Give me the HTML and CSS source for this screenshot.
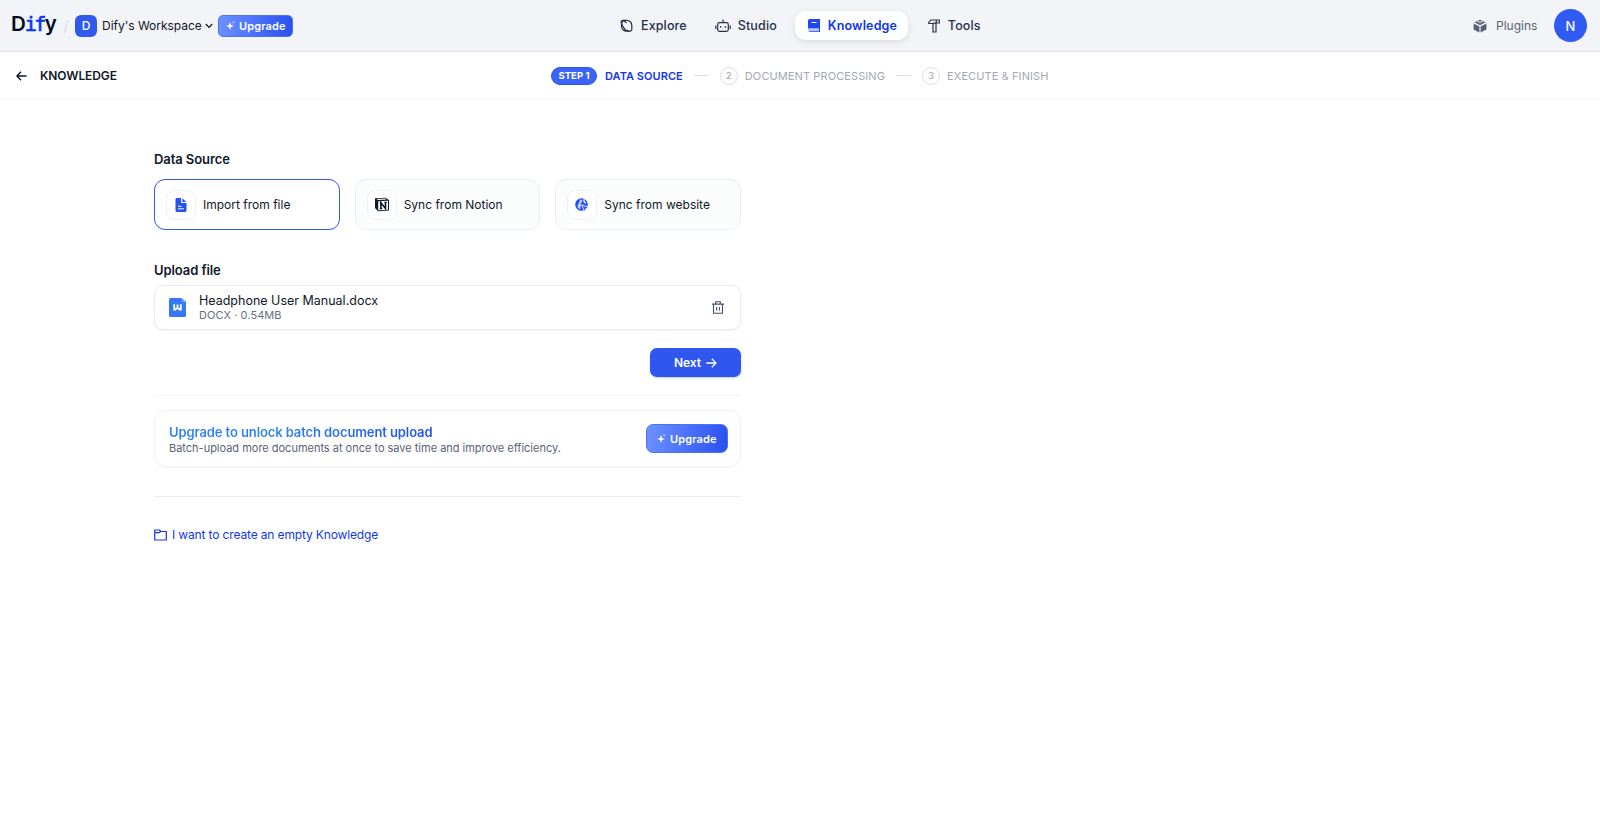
FILE: index.html
```html
<!DOCTYPE html>
<html lang="en">
<head>
<meta charset="utf-8">
<title>Dify - Knowledge</title>
<link rel="stylesheet" href="styles.css">
</head>
<body>
<header class="topbar">
  <div class="brand">
    <span class="logo">D<span class="logo-mid">if</span>y</span>
    <svg class="slash" width="6" height="14" viewBox="0 0 6 14"><path d="M5 .5 1 13.5"/></svg>
    <span class="ws-avatar">D</span>
    <span class="ws-name">Dify's Workspace</span>
    <svg class="chevron" width="8" height="6" viewBox="0 0 8 6"><path d="m.8 1 3.2 3.4L7.2 1"/></svg>
    <button class="upgrade upgrade-sm"><svg width="9" height="9" viewBox="0 0 9 9"><path d="M4 1 5 4 8 5 5 6 4 9 3 6 0 5 3 4z"/><path class="spark" d="M7.3 0v2.4M6.1 1.2h2.4"/></svg><span>Upgrade</span></button>
  </div>
  <nav class="nav">
    <a class="nav-item explore"><svg width="13" height="14" viewBox="0 0 13 14"><path d="M3.500 1.300h3.300a5 5 0 0 1 5 5v4.500l-1.200 1.400H6.500A5 5 0 0 1 1.500 7.200V4.500z"/><path d="M3.500 1.300C1 1.300.8 3 1.500 4.500 3 8.500 6 12 9 12.200M3.500 1.300 6.500 4"/></svg><span>Explore</span></a>
    <a class="nav-item studio"><svg width="16" height="14" viewBox="0 0 16 14"><rect x="2.700" y="3.700" width="10.600" height="8.600" rx="1.800"/><path d="M8 .5v3M.8 6.500v3.500M15.200 6.500v3.500"/><path d="M5.700 7v1.700M10.300 7v1.700"/></svg><span>Studio</span></a>
    <a class="nav-item active"><svg width="12" height="13" viewBox="0 0 12 13"><path class="solid" d="M1.500 0H12v9.500H0v-8Q0 0 1.500 0z"/><path class="pages" d="M0 10h11v2.500H1.500Q0 12.500 0 11z"/><path class="solid" d="M1 12.200h11v.8H1zM11 9h1v4h-1z"/><path class="mark" d="M3.500 3.500h5"/></svg><span>Knowledge</span></a>
    <a class="nav-item tools"><svg width="12" height="14" viewBox="0 0 12 14"><path d="M3 1h8.300v3H8v9H5V4.500H.8V3.200z"/><path d="M5 4.200h3M8.300 1v3"/></svg><span>Tools</span></a>
  </nav>
  <div class="account">
    <svg width="14" height="14" viewBox="0 0 14 14"><path d="M7 .7 12.600 3.300 7 6.200 1.400 3.300zM.6 4.400 6.400 7.400V13.600L.6 10.500zM13.400 4.400 7.600 7.400V13.600l5.800-3.100z"/><path class="cut" d="m3.300 1.500 3.700 2 3.700-2"/></svg>
    <span class="plugins">Plugins</span>
    <span class="user-avatar">N</span>
  </div>
</header>
<div class="subbar">
  <div class="back">
    <svg width="11" height="10" viewBox="0 0 11 10"><path d="M10.500 5H1M5 .8.900 5 5 9.200"/></svg>
    <span>KNOWLEDGE</span>
  </div>
  <ol class="steps">
    <li class="step current"><span class="pill">STEP 1</span><span>DATA SOURCE</span></li>
    <li class="dash"></li>
    <li class="step"><span class="num">2</span><span>DOCUMENT PROCESSING</span></li>
    <li class="dash"></li>
    <li class="step"><span class="num">3</span><span>EXECUTE &amp; FINISH</span></li>
  </ol>
</div>
<main class="content">
  <h2 class="heading">Data Source</h2>
  <div class="sources">
    <div class="source selected"><span class="source-icon"><svg width="12" height="14" viewBox="0 0 12 14"><path class="blue" d="M1.500 0H6v4q0 1 1 1h4.500v7.500Q11.500 14 10 14H2Q.5 14 .5 12.500V1.500Q.5 0 1.500 0z"/><path class="blue" d="M7.300.2 11.300 4H7.300z"/><path class="lines" d="M3 8.300h3.500M3 10.800h6"/></svg></span><span>Import from file</span></div>
    <div class="source"><span class="source-icon"><svg width="16" height="15" viewBox="0 0 16 15"><path d="m1 1.300 10.500-.6L15 3v10.500L4 14.200 1 11z" fill="#0f1728"/><path d="M4.200 4.200 14 3.700v9l-9.800.6z" fill="#fff"/><path d="m2.500 1.900 8.500-.5 1.700 1.200-8.600.5z" fill="#fff"/><path d="M6.900 11.500V5.800l4.600 5.600V5.500" fill="none" stroke="#0f1728" stroke-width="1.600"/><path d="M5.700 5.700h1.800M5.700 11.600h2.500M10.400 5.300h2.300" stroke="#0f1728"/></svg></span><span>Sync from Notion</span></div>
    <div class="source"><span class="source-icon"><svg width="14" height="14" viewBox="0 0 14 14"><circle class="blue" cx="6.500" cy="6.500" r="6.300"/><path d="M5.500 1.200 7.500 2.500 6.500 4.500 5.200 5.500 6.500 7 5.500 8.500 5 11.800 3.200 9.800 2.500 8z" fill="#fff" opacity=".75"/><path d="M9 1.200v2.300l1.800 1.700" fill="none" stroke="#fff"/><path d="m6.800 6.800 7 2.600-3 1.400-1.400 3z" fill="#2f5af5" stroke="#fff" stroke-width=".8"/></svg></span><span>Sync from website</span></div>
  </div>
  <h2 class="heading upload">Upload file</h2>
  <div class="file">
    <svg width="17" height="19" viewBox="0 0 17 19"><path d="M1.500 0H12.500L17 4v13.500Q17 19 15.500 19h-14Q0 19 0 17.500v-16Q0 0 1.500 0z" fill="#3478f6"/><path d="M12.500 0 17 4h-4.500z" fill="#669cfb"/><path d="M5.200 6.200v5.500h1l2.300-2 2.300 2h1V6.200M8.500 6.500V10" fill="none" stroke="#fff" stroke-width="1.800"/></svg>
    <div class="file-info"><div class="file-name">Headphone User Manual.docx</div><div class="file-meta">DOCX <i>·</i> 0.54MB</div></div>
    <svg class="trash" width="12" height="13" viewBox="0 0 12 13"><path d="M0 3.100h12M3.700 3V.8h4.600V3M1.500 3v9.300h9V3M4.600 6v3.500M7.400 6v3.500"/></svg>
  </div>
  <div class="actions"><button class="next"><span>Next</span><svg width="11" height="10" viewBox="0 0 11 10"><path d="M.3 5H10M5.800.8 10 5 5.800 9.200"/></svg></button></div>
  <div class="promo">
    <div><div class="promo-title">Upgrade to unlock batch document upload</div><div class="promo-text">Batch-upload more documents at once to save time and improve efficiency.</div></div>
    <button class="upgrade upgrade-lg"><svg width="9" height="9" viewBox="0 0 9 9"><path d="M4 1 5 4 8 5 5 6 4 9 3 6 0 5 3 4z"/><path class="spark" d="M7.300 0v2.400M6.100 1.200h2.400"/></svg><span>Upgrade</span></button>
  </div>
  <a class="empty"><svg width="13" height="12" viewBox="0 0 13 12"><path d="M.7 11V1h4.800l1.300 1.500h5.500V11zM.7 3.600h4.600l1.400-1.100"/></svg><span>I want to create an empty Knowledge</span></a>
</main>
</body>
</html>
```
FILE: styles.css
```css
* { box-sizing: border-box; }
body { margin: 0; background: #fff; color: #101828; font-family: Inter, "Liberation Sans", sans-serif; font-size: 12px; white-space: nowrap; }
svg { flex: none; fill: none; stroke: currentColor; stroke-width: 1.2; }
button { font: inherit; border: 0; padding: 0; display: flex; align-items: center; color: #fff; }

/* Top bar */
.topbar { height: 52px; display: grid; grid-template-columns: 620px 1fr auto; background: #f2f4f7; border-bottom: 1px solid #dfe2e8; }
.brand, .nav, .account, .nav-item { display: flex; align-items: center; }
.brand { padding-left: 11px; }
.logo { width: 45px; font-size: 20.5px; font-weight: 600; line-height: 28px; color: #030a24; padding-bottom: 3px; letter-spacing: -1px; }
.logo-mid { font-family: "DejaVu Sans Mono", monospace; font-size: 20px; font-weight: 400; letter-spacing: -2.6px; color: #0a33ff; margin-right: 1px; -webkit-text-stroke: .7px #0a33ff; }
.slash { margin: 2px 6px 0 7px; color: #d0d5dd; stroke-width: 1; }
.ws-avatar { width: 22px; height: 22px; border-radius: 6px; background: #2f5af0; color: #fff; display: grid; place-items: center; font-weight: 500; }
.ws-name { margin-left: 5px; width: 99px; letter-spacing: -.02px; }
.chevron { margin: 0 5px 0 4px; }
.upgrade { background: linear-gradient(100deg, #6f91ff, #4a71fa 50%, #2850ee); border: 1px solid #4d73f4; font-size: 11px; font-weight: 600; letter-spacing: .1px; }
.upgrade svg { fill: #fff; stroke: none; }
.upgrade .spark { stroke: #fff; stroke-width: .6; opacity: .7; }
.upgrade-sm { width: 75px; height: 22px; border-radius: 5px; padding-left: 7px; gap: 4px; }
.nav { font-size: 12.5px; font-weight: 500; color: #26304a; letter-spacing: .13px; }
.nav-item { gap: 8px; height: 29px; }
.studio { margin-left: 28px; }
.studio svg { margin-right: -1px; }
.active { margin: 0 20px 0 18px; width: 113px; padding-left: 13px; border-radius: 10px; background: #fcfffe; color: #0f36ee; font-weight: 600; box-shadow: 0 2px 6px rgba(16, 24, 40, .1); }
.active svg { stroke: none; }
.solid { fill: #2048ee; }
.pages { fill: #b5c3fb; }
.mark { stroke: #fff; stroke-width: 1; }
.account { padding-right: 13px; color: #5b6378; }
.account svg { fill: #596075; stroke: none; }
.account .cut { fill: none; stroke: #f2f4f7; stroke-width: 1; }
.plugins { margin: 0 17px 0 9px; width: 41px; }
.user-avatar { width: 33px; height: 33px; border-radius: 50%; background: #2f5af3; color: #fff; display: grid; place-items: center; font-weight: 500; font-size: 13px; }

/* Step bar */
.subbar { height: 48px; display: grid; grid-template-columns: 551px 1fr; align-items: center; border-bottom: 1px solid #f4f5f7; }
.back { display: flex; align-items: center; gap: 13px; padding-left: 16px; font-weight: 600; letter-spacing: -.1px; }
.back svg { stroke-width: 1.4; }
.steps { margin: 0; padding: 0; list-style: none; display: flex; align-items: center; color: #a4a8b3; font-size: 11px; letter-spacing: .1px; }
.step { display: flex; align-items: center; gap: 7px; }
.current { gap: 8px; color: #1238ef; font-weight: 600; letter-spacing: .05px; }
.pill { width: 46px; height: 18px; border-radius: 9px; background: #3a64f5; border: 1px solid #2f58e8; color: #fff; display: grid; place-items: center; font-size: 9.5px; font-weight: 700; }
.num { width: 18px; height: 18px; border: 1px solid #dcdee6; border-radius: 50%; display: grid; place-items: center; font-size: 9px; font-weight: 500; }
.dash { width: 15px; height: 1px; background: #dcdfe5; margin: 0 11px; }

/* Data source form */
.content { width: 587px; margin-left: 154px; padding-top: 49px; }
.heading { margin: 0; font-size: 13px; line-height: 20px; font-weight: 600; letter-spacing: -.08px; }
.sources { margin-top: 10px; display: grid; grid-template-columns: repeat(3, 1fr); gap: 15px; }
.source { height: 51px; padding-left: 11px; display: flex; align-items: center; gap: 7px; border: 1px solid #ebefef; border-radius: 11px; background: #fbfdfd; }
.selected { border-color: #3259f7; background: #fff; }
.source-icon { width: 30px; height: 30px; display: grid; place-items: center; background: #fff; border: 1px solid #f1f2f5; border-radius: 8px; }
.source-icon svg { stroke: none; }
.blue { fill: #2452ef; }
.lines { stroke: #fff; stroke-width: 1; }
.upload { margin-top: 30px; }
.file { margin-top: 5px; height: 45px; border: 1px solid #e9ebf0; border-radius: 9px; display: flex; align-items: center; padding: 0 16px 0 14px; box-shadow: 0 1px 2px rgba(16, 24, 40, .05); }
.file svg { stroke: none; }
.file-info { flex: 1; margin-left: 13px; }
.file-name { line-height: 16px; font-size: 12.5px; }
.file-meta { font-size: 11px; line-height: 13px; color: #667085; letter-spacing: .06px; }
.file-meta i { font-style: normal; }
.file .trash { stroke: #475067; stroke-width: 1.1; }
.actions { display: flex; justify-content: flex-end; padding: 18px 0; border-bottom: 1px solid #f3f4f6; }
.next { width: 91px; height: 29px; justify-content: center; gap: 5px; background: #2f57ef; border-radius: 7px; font-size: 12px; font-weight: 600; letter-spacing: -.1px; box-shadow: 0 1px 2px rgba(47, 87, 239, .3); }
.next svg { stroke-width: 1.3; }
.promo { margin-top: 14px; height: 57px; border: 1px solid #f2f3f5; border-radius: 12px; display: flex; align-items: center; justify-content: space-between; padding: 0 12px 0 14px; box-shadow: 0 1px 2px rgba(16, 24, 40, .04); }
.promo-title { line-height: 18px; font-size: 13px; letter-spacing: -.1px; font-weight: 600; width: 268px; color: transparent; background: linear-gradient(90deg, #2d82ef, #2d82ef 45%, #1f4cf0); background-clip: text; }
.promo-text { font-size: 11px; line-height: 14px; color: #5a6275; letter-spacing: -.012px; }
.upgrade-lg { width: 82px; height: 29px; border-radius: 7px; padding-left: 10px; gap: 4px; }
.empty { margin-top: 29px; padding-top: 30px; border-top: 1px solid #eaecf0; display: flex; align-items: center; gap: 5px; color: #1238ef; letter-spacing: -.14px; }
```
